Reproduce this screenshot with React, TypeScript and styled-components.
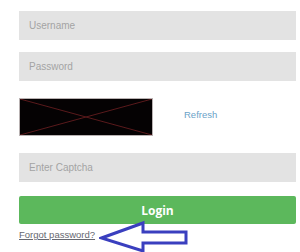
import React from "react";
import styled, { createGlobalStyle } from "styled-components";

const Global = createGlobalStyle`
  html, body { margin: 0; padding: 0; background: #ffffff; }
  body { font-family: "Liberation Sans", Arial, sans-serif; }
`;

const Page = styled.div`
  position: relative;
  width: 300px;
  height: 252px;
  box-sizing: border-box;
  padding: 11px 4px 0 19px;
  overflow: hidden;
`;

const Form = styled.div`
  display: flex;
  flex-direction: column;
`;

const Field = styled.div<{ $mt?: number }>`
  height: 29px;
  margin-top: ${(p) => p.$mt ?? 0}px;
  background: #e3e3e3;
  display: flex;
  align-items: center;
  padding-left: 10px;
  font-size: 10px;
  color: #a3a3a3;
`;

const CaptchaRow = styled.div`
  display: flex;
  align-items: center;
  margin-top: 17px;
  height: 38px;
`;

const CaptchaImg = styled.div`
  width: 134px;
  height: 38px;
  box-sizing: border-box;
  background: #050203;
  border: 1px solid #b9b2b2;
  flex-shrink: 0;
`;

const RefreshLink = styled.span`
  margin-left: 31px;
  margin-top: -5px;
  font-size: 9.5px;
  color: #6aa2c8;
`;

const LoginButton = styled.div`
  margin-top: 14px;
  height: 28px;
  background: #5cb85c;
  border-radius: 2px;
  display: flex;
  align-items: center;
  justify-content: center;
  color: #ffffff;
  font-family: "Open Sans", sans-serif;
  font-weight: 700;
  font-size: 12px;
`;

const Forgot = styled.span`
  margin-top: 5px;
  font-size: 9.5px;
  color: #666870;
  text-decoration: underline;
  align-self: flex-start;
`;

const Arrow = styled.svg`
  position: absolute;
  left: 99px;
  top: 220px;
`;

export default function App() {
  return (
    <>
      <Global />
      <Page>
        <Form>
          <Field>Username</Field>
          <Field $mt={12}>Password</Field>
          <CaptchaRow>
            <CaptchaImg>
              <svg width="132" height="36" viewBox="0 0 132 36">
                <line x1="0" y1="0" x2="132" y2="36" stroke="#5a1a1c" strokeWidth="1" />
                <line x1="132" y1="0" x2="0" y2="36" stroke="#5a1a1c" strokeWidth="1" />
              </svg>
            </CaptchaImg>
            <RefreshLink>Refresh</RefreshLink>
          </CaptchaRow>
          <Field $mt={17}>Enter Captcha</Field>
          <LoginButton>Login</LoginButton>
          <Forgot>Forgot password?</Forgot>
        </Form>
        <Arrow width="92" height="34" viewBox="0 0 92 34">
          <polygon
            points="2.5,18 44,3 44,12 87,12 87,23 44,23 44,31"
            fill="#ffffff"
            stroke="#3a3fbf"
            strokeWidth="3"
            strokeLinejoin="miter"
          />
        </Arrow>
      </Page>
    </>
  );
}
